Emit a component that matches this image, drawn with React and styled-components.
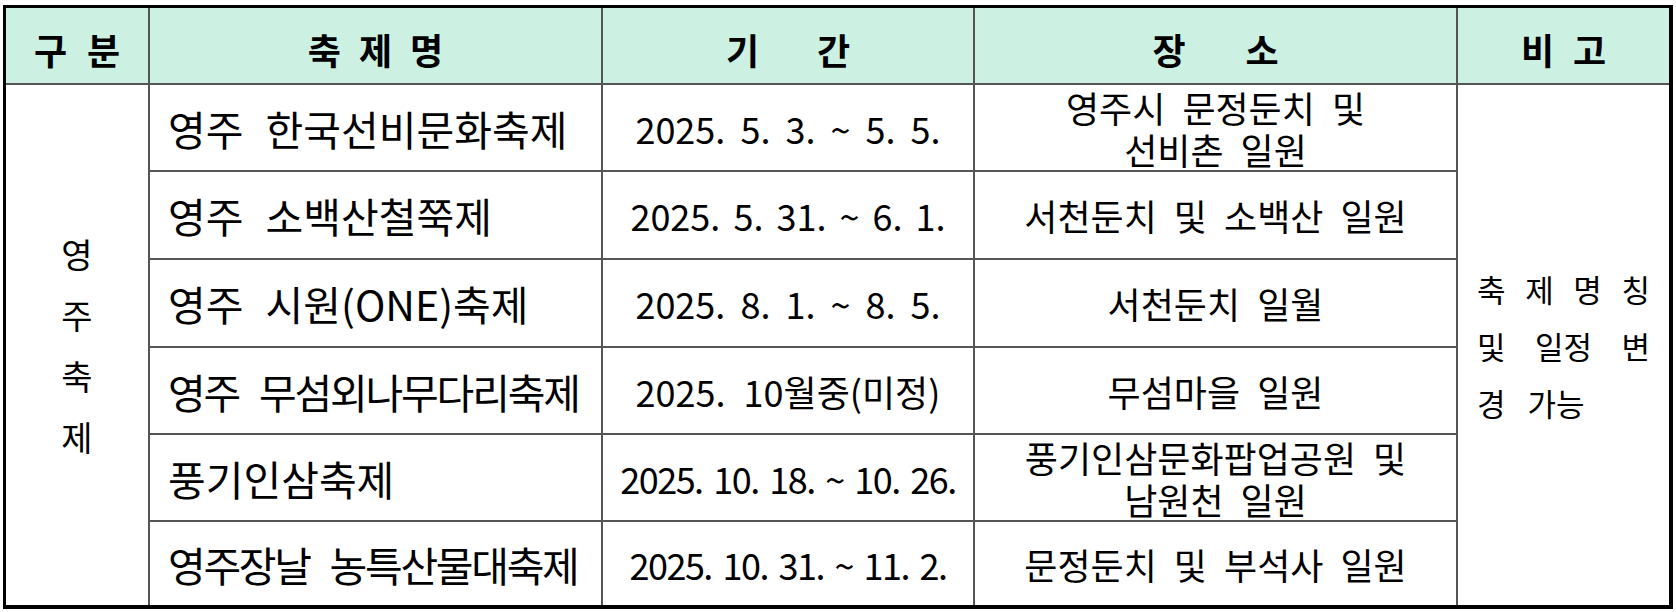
import styled, { createGlobalStyle } from 'styled-components';

const GlobalStyle = createGlobalStyle`
  html, body {
    margin: 0;
    padding: 0;
    background: #fff;
  }
  body {
    font-family: 'Noto Sans CJK KR', 'Noto Sans', sans-serif;
    color: #000;
  }
`;

const Page = styled.div`
  padding: 5px 0 0 3px;
  height: 607px;
`;

const Table = styled.div`
  display: grid;
  grid-template-columns: 144px 453px 372px 483px 211px;
  grid-template-rows: 77px 87px 88px 88px 87px 87px 83px;
  width: 1663px;
  border: solid #000;
  border-width: 3px 4px 4px 3px;
`;

const Cell = styled.div`
  box-sizing: border-box;
  display: flex;
  align-items: center;
  justify-content: ${({ $left }) => ($left ? 'flex-start' : 'center')};
  padding-left: ${({ $left }) => ($left ? '18px' : '0')};
  border-right: ${({ $lastCol }) => ($lastCol ? 'none' : '2px solid #555')};
  border-bottom: ${({ $lastRow }) => ($lastRow ? 'none' : '2px solid #555')};
  min-width: 0;
  white-space: nowrap;
`;

const HeadCell = styled(Cell)`
  background: #ccf0e1;
  gap: ${({ $gap }) => $gap}px;
  font-size: 36px;
  font-weight: 700;
  padding-top: 6px;
`;

const NameCell = styled(Cell)`
  font-size: 41px;
  word-spacing: 13px;
  letter-spacing: ${({ $ls }) => $ls}px;
`;

const DateCell = styled(Cell)`
  font-size: 36px;
  word-spacing: ${({ $ws }) => $ws}px;
  letter-spacing: ${({ $ls }) => $ls}px;
`;

const PlaceCell = styled(Cell)`
  font-size: 36px;
  line-height: 42px;
  text-align: center;
  white-space: pre-line;
  word-spacing: 9px;
`;

const GroupCell = styled(Cell)`
  grid-column: 1;
  grid-row: 2 / span 6;
  flex-direction: column;
  font-size: 34px;
  line-height: 61px;
`;

const NoteCell = styled(Cell)`
  grid-column: 5;
  grid-row: 2 / span 6;
  flex-direction: column;
  align-items: stretch;
  padding: 0 19px 0 19px;
  font-size: 31px;
  line-height: 57px;
`;

const NoteLine = styled.div`
  display: flex;
  justify-content: ${({ $spread }) => ($spread ? 'space-between' : 'flex-start')};
  gap: ${({ $spread }) => ($spread ? '0' : '22px')};
`;

const headers = [
  { chars: ['구', '분'], gap: 20 },
  { chars: ['축', '제', '명'], gap: 18 },
  { chars: ['기', '간'], gap: 58 },
  { chars: ['장', '소'], gap: 60 },
  { chars: ['비', '고'], gap: 19 },
];

const festivals = [
  { name: '영주 한국선비문화축제', nls: 0, date: '2025. 5. 3. ~ 5. 5.', ws: 7, dls: 0, place: '영주시 문정둔치 및\n선비촌 일원' },
  { name: '영주 소백산철쭉제', nls: 0, date: '2025. 5. 31. ~ 6. 1.', ws: 5, dls: 0, place: '서천둔치 및 소백산 일원' },
  { name: '영주 시원(ONE)축제', nls: 0, date: '2025. 8. 1. ~ 8. 5.', ws: 7, dls: 0, place: '서천둔치 일월' },
  { name: '영주 무섬외나무다리축제', nls: -2.2, date: '2025. 10월중(미정)', ws: 10, dls: 0, place: '무섬마을 일원' },
  { name: '풍기인삼축제', nls: 0, date: '2025. 10. 18. ~ 10. 26.', ws: 4, dls: -1.5, place: '풍기인삼문화팝업공원 및\n남원천 일원' },
  { name: '영주장날 농특산물대축제', nls: -2.3, date: '2025. 10. 31. ~ 11. 2.', ws: 4, dls: -1.5, place: '문정둔치 및 부석사 일원' },
];

export default function App() {
  return (
    <>
      <GlobalStyle />
      <Page>
        <Table>
          {headers.map((h, i) => (
            <HeadCell key={i} $gap={h.gap} $lastCol={i === headers.length - 1}>
              {h.chars.map((c) => (
                <span key={c}>{c}</span>
              ))}
            </HeadCell>
          ))}

          <GroupCell $lastRow>
            {['영', '주', '축', '제'].map((c) => (
              <span key={c}>{c}</span>
            ))}
          </GroupCell>

          <NoteCell $lastRow $lastCol>
            <NoteLine $spread>
              <span>축</span>
              <span>제</span>
              <span>명</span>
              <span>칭</span>
            </NoteLine>
            <NoteLine $spread>
              <span>및</span>
              <span>일정</span>
              <span>변</span>
            </NoteLine>
            <NoteLine>
              <span>경</span>
              <span>가능</span>
            </NoteLine>
          </NoteCell>

          {festivals.map((f, i) => {
            const last = i === festivals.length - 1;
            return [
              <NameCell key={`n${i}`} $left $ls={f.nls} $lastRow={last}>
                {f.name}
              </NameCell>,
              <DateCell key={`d${i}`} $ws={f.ws} $ls={f.dls} $lastRow={last}>
                {f.date}
              </DateCell>,
              <PlaceCell key={`p${i}`} $lastRow={last}>
                {f.place}
              </PlaceCell>,
            ];
          })}
        </Table>
      </Page>
    </>
  );
}
